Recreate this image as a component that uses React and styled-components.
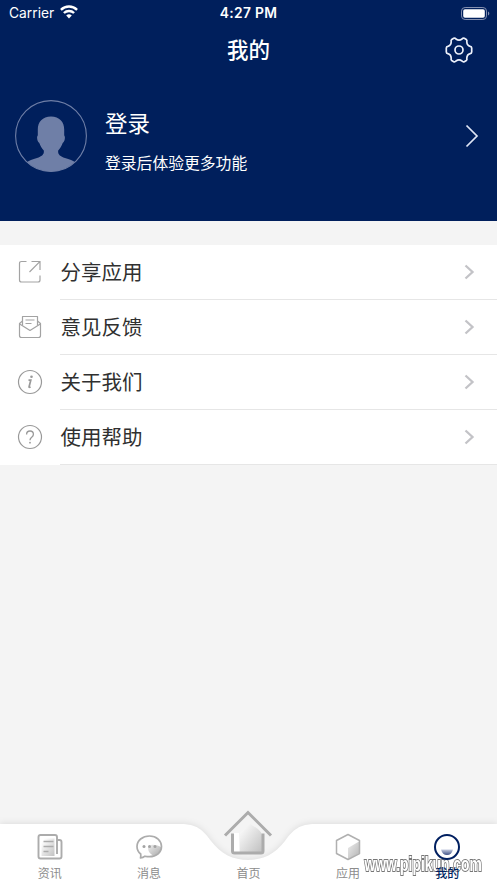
import React from 'react'
import styled, { createGlobalStyle } from 'styled-components'

const App = () => {

    const rows = menu.map((item) => (
        <Row key={item.title}>
            <RowIcon>{item.icon}</RowIcon>
            <RowBody>
                <RowTitle>{item.title}</RowTitle>
                <svg width="11" height="16" viewBox="0 0 11 16" fill="none">
                    <path d="M1.5 1.5 8.5 8l-7 6.5" stroke="#c3c3c7" strokeWidth="2.3" />
                </svg>
            </RowBody>
        </Row>
    ))

    const items = tabs.map((tab) => (
        <Tab key={tab.title} $active={tab.active}>
            <TabIcon $raised={tab.raised}>{tab.icon}</TabIcon>
            <TabLabel>{tab.title}</TabLabel>
        </Tab>
    ))

    return (
        <Screen>
            <GlobalStyle />
            <Header>
                <StatusBar>
                    <Carrier>
                        Carrier
                        <WifiIcon />
                    </Carrier>
                    <Time>4:27 PM</Time>
                    <BatteryIcon />
                </StatusBar>
                <NavBar>
                    <NavTitle>我的</NavTitle>
                    <GearIcon />
                </NavBar>
                <Profile>
                    <Avatar />
                    <ProfileText>
                        <Login>登录</Login>
                        <Hint>登录后体验更多功能</Hint>
                    </ProfileText>
                    <svg width="14" height="24" viewBox="0 0 14 24" fill="none">
                        <path d="M1.5 1.5 12 12 1.5 22.5" stroke="#dfe6f5" strokeWidth="1.7" />
                    </svg>
                </Profile>
            </Header>
            <Menu>{rows}</Menu>
            <TabBar>
                <TabShape />
                <Watermark>www.pipikun.com</Watermark>
                {items}
            </TabBar>
        </Screen>
    )
}

export default App


const WifiIcon = () => (
    <svg width="18" height="14" viewBox="0 0 18 14" fill="none" stroke="#fff" strokeWidth="2.4">
        <path d="M.9 4.8a11.7 11.7 0 0 1 16.2 0" />
        <path d="M3.9 8a7.4 7.4 0 0 1 10.2 0" />
        <path d="M9 13.4 6.2 10.5a4 4 0 0 1 5.6 0z" fill="#fff" stroke="none" />
    </svg>
)

const BatteryIcon = () => (
    <svg width="29" height="13" viewBox="0 0 29 13" fill="none">
        <rect x=".5" y=".5" width="25" height="12" rx="3.6" stroke="#8490b0" />
        <rect x="2.2" y="2.2" width="21.6" height="8.6" rx="1.8" fill="#fff" />
        <path d="M27 4.5c1.8.6 1.8 3.4 0 4z" fill="#8490b0" />
    </svg>
)

const GearIcon = () => (
    <svg width="28" height="28" viewBox="0 0 28 28" fill="none" stroke="#edf1fb" strokeWidth="1.7" strokeLinejoin="round">
        <path d="M8.7 2.3Q10 1.8 11 3Q14 5.2 17 3Q18 1.8 19.3 2.3L21.3 3.5Q22.3 4.3 21.8 5.7Q21.9 9.5 25.2 10.3Q26.6 10.6 26.7 12V16Q26.6 17.4 25.2 17.7Q21.9 18.5 21.8 22.3Q22.3 23.7 21.3 24.5L19.3 25.7Q18 26.2 17 25Q14 22.8 11 25Q10 26.2 8.7 25.7L6.7 24.5Q5.7 23.7 6.2 22.3Q6.1 18.5 2.8 17.7Q1.4 17.4 1.3 16V12Q1.4 10.6 2.8 10.3Q6.1 9.5 6.2 5.7Q5.7 4.3 6.7 3.5Z" />
        <circle cx="14" cy="14" r="4" />
    </svg>
)

const Avatar = () => (
    <svg width="72" height="72" viewBox="0 0 72 72" fill="none">
        <clipPath id="face">
            <circle cx="36" cy="36" r="35.5" />
        </clipPath>
        <g clipPath="url(#face)">
            <path d="M36 16.5C27.500 16.500 22.800 22 22.800 29.500V35.500C21.500 36.500 22 41.500 24.300 43C25.500 46 27 48.500 28.800 50.500C29.300 54.500 27 56.300 22 58C17.500 59.300 14 60.500 11 63V73H61V63C58 60.500 54.500 59.300 50 58C45 56.300 42.700 54.500 43.200 50.500C45 48.500 46.500 46 47.700 43C50 41.500 50.500 36.500 49.200 35.500V29.500C49.200 22 44.500 16.500 36 16.500Z" fill="#6f7fa7" />
        </g>
        <circle cx="36" cy="36" r="35.4" stroke="#6f7fa7" strokeWidth="1.1" />
    </svg>
)

const ShareIcon = () => (
    <svg width="26" height="26" viewBox="0 0 26 26" fill="none" stroke="#a3a3a3" strokeWidth="1.2">
        <path d="M9.500 2.500H4.500Q2.500 2.500 2.500 4.500V21Q2.500 23 4.500 23H21Q23 23 23 21V16.500" />
        <path d="M12.500 13 22.800 2.700M14.500 2.500H23V11" />
    </svg>
)

const MailIcon = () => (
    <svg width="26" height="26" viewBox="0 0 26 26" fill="none" stroke="#a3a3a3" strokeWidth="1.2" strokeLinejoin="round">
        <path d="M5.500 7 2.500 9.500V21.500Q2.500 23.500 4.500 23.500H21.500Q23.500 23.500 23.500 21.500V9.500L20.500 7" />
        <path d="M2.700 10 13 16.500 23.300 10" />
        <path d="M5.500 11.500V2.500H20.500V11.500M8.500 6H17.500M8.500 9.500H14.500" />
    </svg>
)

const AboutIcon = () => (
    <svg width="26" height="26" viewBox="0 0 26 26" fill="none" stroke="#999">
        <circle cx="13" cy="13" r="11.500" strokeWidth="1.200" />
        <path d="M11.500 11.200h2.300l-1.700 6.500q-.2 1 1.500.3" strokeWidth="1.700" />
        <circle cx="14.500" cy="7.700" r="1.300" fill="#999" stroke="none" />
    </svg>
)

const HelpIcon = () => (
    <svg width="26" height="26" viewBox="0 0 26 26" fill="none" stroke="#999">
        <circle cx="13" cy="13" r="11.500" strokeWidth="1.200" />
        <path d="M9.600 10.500Q9.600 7 13 7T16.400 10.200Q16.400 12 14.700 13.200T13 16.300" strokeWidth="1.300" />
        <circle cx="13" cy="18.700" r=".9" fill="#999" stroke="none" />
    </svg>
)

const NewsIcon = () => (
    <svg width="26" height="28" viewBox="0 0 26 28" fill="none" stroke="#acacac" strokeWidth="1.900">
        <linearGradient id="news" x1="0" y1="0" x2="1" y2="1">
            <stop offset=".1" stopColor="#fff" />
            <stop offset="1" stopColor="#c2c2c2" />
        </linearGradient>
        <rect x="4.500" y="5.500" width="13" height="17.500" fill="url(#news)" stroke="none" />
        <path d="M20 21V4Q20 2 18 2H3.500Q1.500 2 1.500 4V23.500Q1.500 25.500 3.500 25.500H22.500Q24.500 25.500 24.500 23.500V9Q24.500 7 22.500 7H20.500" />
        <path d="M6.500 8.500H16.500M6.500 13.500H16.500M6.500 18.500H11.500" strokeWidth="1.500" />
    </svg>
)

const MessageIcon = () => (
    <svg width="28" height="28" viewBox="0 0 28 28" fill="none">
        <linearGradient id="bubble" x1="0" y1="0" x2="1" y2="1">
            <stop offset="0" stopColor="#eee" />
            <stop offset="1" stopColor="#aaa" />
        </linearGradient>
        <path d="M13 15C13 11 20 11 26 14C26 20 21 23 18 22.500Q13 20 13 15Z" fill="url(#bubble)" />
        <path d="M14.500 3C7.500 3 2 7.500 2 13.500Q2 18 5.700 21Q6 23 5.500 25Q8 24.800 10 23.200Q12 23.700 14.500 23.700C21.500 23.700 26.500 19.300 26.500 13.500S21.500 3 14.500 3Z" stroke="#acacac" strokeWidth="1.700" strokeLinejoin="round" />
        <g fill="#a3a3a3">
            <circle cx="9" cy="13.500" r="1.500" />
            <circle cx="14.500" cy="13.500" r="1.500" />
            <circle cx="20" cy="13.500" r="1.500" />
        </g>
    </svg>
)

const HomeIcon = () => (
    <svg width="50" height="46" viewBox="0 0 50 46" fill="none" stroke="#acacac" strokeWidth="3">
        <linearGradient id="home" x1="0" y1="0" x2="1" y2="1">
            <stop offset=".15" stopColor="#f7f7f7" />
            <stop offset="1" stopColor="#c0c0c0" />
        </linearGradient>
        <path d="M10 23V42H16V23Z" fill="#fff" stroke="none" />
        <path d="M17 23 27 14Q38 20 39 25V42H17Z" fill="url(#home)" stroke="none" />
        <path d="M2 25.500 25 2.500 48 25.500" />
        <path d="M9.500 23.500V41Q9.500 43 11.500 43H38Q40 43 40 41V23.500" />
    </svg>
)

const CubeIcon = () => (
    <svg width="26" height="28" viewBox="0 0 26 28" fill="none">
        <linearGradient id="cube" x1="0" y1="0" x2="1" y2="1">
            <stop offset="0" stopColor="#ededed" />
            <stop offset="1" stopColor="#b5b5b5" />
        </linearGradient>
        <path d="M13 15 24 8.500V20L13 26Z" fill="url(#cube)" />
        <path d="M13 1.500 24.500 7.500V20.500L13 26.500 1.500 20.500V7.500Z" stroke="#b0b0b0" strokeWidth="1.500" strokeLinejoin="round" />
    </svg>
)

const MeIcon = () => (
    <svg width="28" height="28" viewBox="0 0 28 28" fill="none">
        <linearGradient id="me" x1="0" y1="0" x2="0" y2="1">
            <stop offset="0" stopColor="#c5cce0" />
            <stop offset="1" stopColor="#3d5085" />
        </linearGradient>
        <path d="M8 16.500H20Q18.500 22 14 22T8 16.500Z" fill="url(#me)" />
        <circle cx="14" cy="14" r="12" stroke="#001f60" strokeWidth="2" />
    </svg>
)

const TabShape = () => (
    <Shape viewBox="0 -10 497 69">
        <path d="M-9 0H180C197 0 203 6 211 17C221 30 233 36 248 36S275 30 285 17C293 6 299 0 316 0H506V69H-9Z" fill="#fff" />
    </Shape>
)

const menu = [
    { title: '分享应用', icon: <ShareIcon /> },
    { title: '意见反馈', icon: <MailIcon /> },
    { title: '关于我们', icon: <AboutIcon /> },
    { title: '使用帮助', icon: <HelpIcon /> },
]

const tabs = [
    { title: '资讯', icon: <NewsIcon /> },
    { title: '消息', icon: <MessageIcon /> },
    { title: '首页', icon: <HomeIcon />, raised: true },
    { title: '应用', icon: <CubeIcon /> },
    { title: '我的', icon: <MeIcon />, active: true },
]


const GlobalStyle = createGlobalStyle`
    * {
        box-sizing: border-box;
    }

    body {
        margin: 0;
        font-family: Inter, "Noto Sans CJK SC", sans-serif;
    }

    svg {
        display: block;
        flex-shrink: 0;
    }
`

const Screen = styled.div`
    height: 883px;
    display: flex;
    flex-direction: column;
    overflow: hidden;
    background-color: #f4f4f4;
`

const Header = styled.header`
    height: 221px;
    background-color: #001f5c;
    color: #fff;
`

const StatusBar = styled.div`
    height: 26px;
    padding: 0 7px 0 9px;

    display: grid;
    grid-template-columns: 1fr auto 1fr;
    align-items: center;

    svg:last-child {
        justify-self: end;
    }
`

const Carrier = styled.div`
    display: flex;
    align-items: center;
    gap: 6px;
    font-size: 13.8px;

    svg {
        margin-top: -2px;
    }
`

const Time = styled.div`
    font-size: 13.8px;
    font-weight: 600;
    letter-spacing: 0.3px;
    margin-right: 2px;
`

const NavBar = styled.div`
    height: 47px;
    padding-right: 24px;

    display: grid;
    grid-template-columns: 1fr auto 1fr;
    align-items: center;

    svg {
        justify-self: end;
    }
`

const NavTitle = styled.h1`
    grid-column: 2;
    margin: 0 -24px 0 0;
    font-size: 21.5px;
    font-weight: 500;
    line-height: 30px;
`

const Profile = styled.div`
    height: 72px;
    margin-top: 27px;
    padding: 0 18px 0 14.5px;

    display: flex;
    align-items: center;
`

const ProfileText = styled.div`
    flex: 1;
    margin-left: 18.5px;
    padding-top: 11px;
`

const Login = styled.div`
    font-size: 22.5px;
    line-height: 34px;
`

const Hint = styled.div`
    margin-top: 11px;
    font-size: 15.8px;
    line-height: 24px;
`

const Menu = styled.div`
    margin-top: 24px;
    background-color: #fff;
`

const Row = styled.div`
    height: 55px;
    display: flex;
`

const RowIcon = styled.div`
    width: 60px;
    padding: 0 0 2px 17px;

    display: flex;
    align-items: center;
`

const RowBody = styled.div`
    flex: 1;
    padding-right: 22px;
    border-bottom: 1px solid #e6e6e6;

    display: flex;
    align-items: center;
    justify-content: space-between;
`

const RowTitle = styled.div`
    padding: 0 0 2px 0.5px;
    font-size: 20.5px;
    color: #303030;
`

const TabBar = styled.nav`
    position: relative;
    height: 59px;
    margin-top: auto;

    display: grid;
    grid-template-columns: repeat(5, 1fr);
`

const Shape = styled.svg`
    position: absolute;
    top: -10px;
    left: 0;
    width: 497px;
    height: 69px;
    filter: drop-shadow(0 -1px 3px rgba(0, 0, 0, 0.09));
`

const Tab = styled.div`
    position: relative;
    height: 59px;

    display: flex;
    flex-direction: column;
    align-items: center;
    justify-content: flex-end;

    color: ${props => props.$active ? '#001f60' : '#8c8c8c'};
    font-weight: ${props => props.$active ? 500 : 400};
`

const TabIcon = styled.div`
    height: 28px;
    margin-bottom: ${props => props.$raised ? '9px' : '4px'};

    display: flex;
    align-items: flex-end;
`

const TabLabel = styled.div`
    font-size: 12px;
    line-height: 18px;
`

const Watermark = styled.div`
    position: absolute;
    right: 15px;
    bottom: 8px;

    font-family: "Liberation Sans", Arial, sans-serif;
    font-size: 21px;
    font-weight: 700;
    line-height: 22px;
    color: #fff;
    -webkit-text-stroke: 2px #777;
    paint-order: stroke fill;
    white-space: nowrap;
    transform: scaleX(0.66);
    transform-origin: right center;
`
